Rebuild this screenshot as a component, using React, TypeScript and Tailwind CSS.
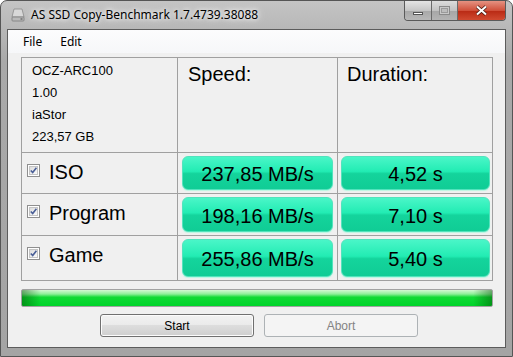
import React from 'react'

const ui = { fontFamily: '"Noto Sans", "Open Sans", sans-serif' }
const ms = { fontFamily: '"Liberation Sans", Arial, sans-serif' }

const DriveIcon = () => (
	<svg width="14" height="14" viewBox="0 0 14 14">
		<path d="M3 1 H11 L13 9 H1 Z" fill="#d8d8d8" stroke="#8a8a8a" strokeWidth="0.8" />
		<rect x="1" y="9" width="12" height="4" rx="0.8" fill="#b9b9b9" stroke="#7c7c7c" strokeWidth="0.8" />
		<rect x="9.5" y="10.3" width="2" height="1.4" fill="#6c6c6c" />
	</svg>
)

const Check = () => (
	<div className="w-[13px] h-[13px] border border-[#8f8f8f] bg-white p-[1px] shrink-0">
		<div className="w-full h-full bg-[linear-gradient(135deg,#dcdcdc,#fbfbfb)] border border-[#c4c4c4]">
			<svg width="9" height="9" viewBox="0 0 9 9" className="-ml-[1px] -mt-[1px]">
				<path d="M1.8 4.4 L3.7 6.6 L7.4 1.8" fill="none" stroke="#4a5f97" strokeWidth="1.6" />
			</svg>
		</div>
	</div>
)

const Pill = ({ text }: { text: string }) => (
	<div className="flex-1 h-full rounded-[6px] border border-[#52e3bd] shadow-[0_1px_1px_#b8f7e2] bg-[linear-gradient(to_bottom,#4af6c8_0%,#22ecb3_45%,#14d49c_52%,#10cc95_100%)] flex items-center justify-center pt-[2px] text-[20px] text-black" style={ms}>
		{text}
	</div>
)

const rows = [
	{ name: 'ISO', speed: '237,85 MB/s', dur: '4,52 s', h: 'h-[41px]' },
	{ name: 'Program', speed: '198,16 MB/s', dur: '7,10 s', h: 'h-[42px]' },
	{ name: 'Game', speed: '255,86 MB/s', dur: '5,40 s', h: 'h-[45px]' }
]

const App = () => {
	return (
		<div className="w-[513px] h-[357px] bg-[linear-gradient(to_bottom,#c4c4c4,#a9a9a9_60px,#a4a4a4)] border border-[#555] rounded-t-[7px] flex flex-col px-[6px] pb-[8px]">
			<div className="h-[28px] flex items-start shrink-0">
				<div className="flex items-center pt-[5px] pl-[4px] gap-[6px]">
					<DriveIcon />
					<span className="text-[12px] text-black [text-shadow:0_0_8px_#fff,0_0_4px_#fff]" style={ui}>
						AS SSD Copy-Benchmark 1.7.4739.38088
					</span>
				</div>
				<div className="ml-auto flex border border-t-0 border-[#5a5a5a] rounded-b-[4px] overflow-hidden h-[20px]">
					<div className="w-[27px] h-full bg-[linear-gradient(to_bottom,#e4e4e4,#c6c6c6_50%,#a8a8a8_52%,#b8b8b8)] border-r border-[#6a6a6a] flex items-center justify-center">
						<div className="w-[10px] h-[3px] bg-white border border-[#555] mt-[5px]" />
					</div>
					<div className="w-[26px] h-full bg-[linear-gradient(to_bottom,#dcdcdc,#c2c2c2_50%,#a6a6a6_52%,#b4b4b4)] border-r border-[#6a6a6a] flex items-center justify-center">
						<div className="w-[11px] h-[9px] border border-[#8a8a8a] bg-[#c8c8c8] p-[1px]">
							<div className="w-full h-full border border-[#9a9a9a] bg-[#bdbdbd]" />
						</div>
					</div>
					<div className="w-[47px] h-full bg-[linear-gradient(to_bottom,#e59282,#d0503a_50%,#b92a14_52%,#d04a30)] flex items-center justify-center">
						<svg width="13" height="11" viewBox="0 0 13 11">
							<path d="M2 1.5 L11 9.5 M11 1.5 L2 9.5" stroke="#4a1a12" strokeWidth="3.6" />
							<path d="M2 1.5 L11 9.5 M11 1.5 L2 9.5" stroke="#fff" strokeWidth="2" />
						</svg>
					</div>
				</div>
			</div>
			<div className="flex-1 border border-[#5c5c5c] bg-[#f0f0f0] flex flex-col">
				<div className="h-[23px] bg-[linear-gradient(to_bottom,#fcfcfd,#f6f7f9)] flex items-center gap-[18px] pl-[15px] text-[12px] text-black" style={ui}>
					<span>File</span>
					<span>Edit</span>
				</div>
				<div className="pl-[13px] pt-[4px]">
					<div className="w-[472px] border-l border-t border-[#a0a0a0]" style={ms}>
						<div className="flex h-[95px]">
							<div className="w-[156px] border-r border-b border-[#a0a0a0] pl-[10px] pt-[2px] text-[13px] leading-[22px] text-black">
								<div>OCZ-ARC100</div>
								<div>1.00</div>
								<div>iaStor</div>
								<div>223,57 GB</div>
							</div>
							<div className="w-[160px] border-r border-b border-[#a0a0a0] pl-[10px] pt-[1px] text-[20px] text-black">Speed:</div>
							<div className="w-[155px] border-r border-b border-[#a0a0a0] pl-[9px] pt-[1px] text-[20px] text-black">Duration:</div>
						</div>
						{rows.map((r) => (
							<div key={r.name} className={`flex ${r.h}`}>
								<div className="w-[156px] border-r border-b border-[#a0a0a0] flex items-start pt-[9px] pl-[5px] gap-[9px] text-[20px] text-black">
									<div className="pt-[2px]">
										<Check />
									</div>
									<span className="leading-[20px]">{r.name}</span>
								</div>
								<div className="w-[160px] border-r border-b border-[#a0a0a0] flex px-[4px] py-[3px]">
									<Pill text={r.speed} />
								</div>
								<div className="w-[155px] border-r border-b border-[#a0a0a0] flex pl-[3px] pr-[2px] py-[3px]">
									<Pill text={r.dur} />
								</div>
							</div>
						))}
					</div>
				</div>
				<div className="pl-[13px] pt-[8px]">
					<div className="w-[472px] h-[18px] border border-[#a2a2a2] rounded-[2px] bg-[linear-gradient(to_right,rgba(0,70,0,0.45)_0%,transparent_4%,transparent_96%,rgba(0,70,0,0.45)_100%),linear-gradient(to_bottom,#d4f8d4_0%,#8ef09a_25%,#10da34_45%,#00d42a_100%)]" />
				</div>
				<div className="flex gap-[10px] pl-[92px] pt-[7px]" style={ms}>
					<div className="w-[154px] h-[23px] rounded-[3px] border border-[#707070] bg-[linear-gradient(to_bottom,#f2f2f2_0%,#ebebeb_45%,#dddddd_50%,#cfcfcf_100%)] shadow-[inset_0_0_0_1px_#fcfcfc] flex items-center justify-center text-[12px] text-black">
						Start
					</div>
					<div className="w-[154px] h-[23px] rounded-[3px] border border-[#adb2b5] bg-[#f4f4f4] flex items-center justify-center text-[12px] text-[#838383]">
						Abort
					</div>
				</div>
			</div>
		</div>
	)
}

export default App
